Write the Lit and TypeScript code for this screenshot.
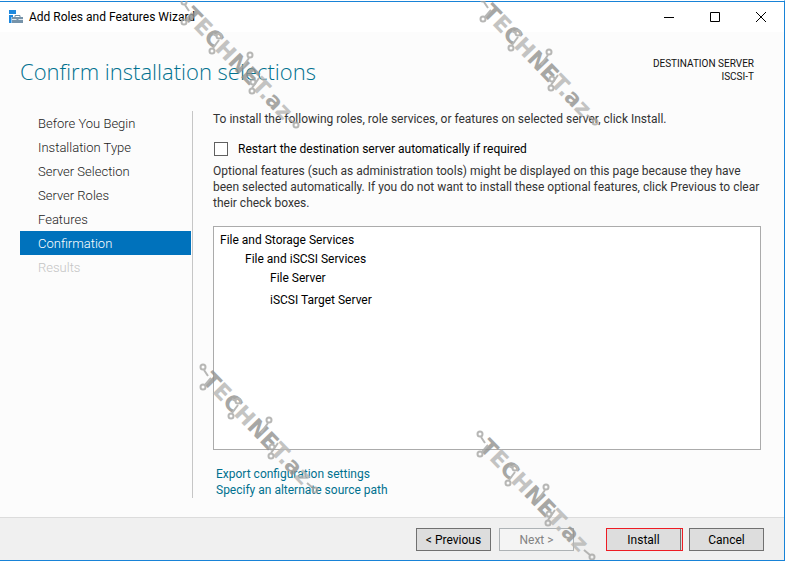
import { LitElement, html, css, svg } from "lit";
import { customElement, property } from "lit/decorators.js";
import { classMap } from "lit/directives/class-map.js";
import { styleMap } from "lit/directives/style-map.js";

type StepState = "done" | "current" | "disabled";

const STEPS: { label: string; state: StepState }[] = [
  { label: "Before You Begin", state: "done" },
  { label: "Installation Type", state: "done" },
  { label: "Server Selection", state: "done" },
  { label: "Server Roles", state: "done" },
  { label: "Features", state: "done" },
  { label: "Confirmation", state: "current" },
  { label: "Results", state: "disabled" },
];

const MARKS = [
  { x: 184, y: 2 },
  { x: 483, y: -1 },
  { x: 203, y: 367 },
  { x: 480, y: 434 },
];

/** Diagonal site stamp: lettering with circuit-board leads. */
@customElement("site-stamp")
class SiteStamp extends LitElement {
  static styles = css`
    :host {
      display: block;
      width: 130px;
      height: 136px;
    }
    svg {
      display: block;
      overflow: visible;
      opacity: 0.8;
    }
    .word {
      font: bold 22px "DejaVu Sans", sans-serif;
    }
    .dark {
      fill: #92928f;
    }
    .pale {
      fill: #b6b6b4;
    }
    .lead {
      fill: none;
      stroke: #a6a6a4;
      stroke-width: 2;
    }
  `;
  render() {
    const nodes = [[0, 0], [0, 20], [35, 34], [28, 49], [66, 53], [69, 80], [68, 89], [112, 123]];
    return html`<svg width="130" height="136" viewBox="-4 -4 130 136">
      <text class="word" transform="translate(-2 14) rotate(46)"
        ><tspan class="dark">T</tspan><tspan class="pale">E</tspan><tspan class="dark">C</tspan
        ><tspan class="pale">H</tspan><tspan class="dark">NE</tspan><tspan class="pale">T.</tspan
        ><tspan class="dark">a</tspan><tspan class="pale">z</tspan></text>
      <path class="lead" d="M1 3 L5 9 M2 18 L8 11 M33 34 L29 32 M29 46 L35 38 M65 56 L58 66 M68 86 L75 76 M110 121 L104 116" />
      ${nodes.map(([x, y]) => svg`<circle class="lead" cx=${x} cy=${y} r="2.5" />`)}
    </svg>`;
  }
}

@customElement("wizard-steps")
class WizardSteps extends LitElement {
  @property({ attribute: false }) steps: { label: string; state: StepState }[] = [];

  static styles = css`
    ol {
      list-style: none;
      margin: 0;
      padding: 0;
      font-size: 13px;
      font-weight: 300;
      line-height: 22px;
    }
    .step {
      padding: 2px 0 0 18px;
      color: #222;
    }
    .current {
      background: #0072bc;
      color: #fff;
    }
    .disabled {
      color: #c4c4c4;
    }
  `;
  render() {
    return html`<ol>
      ${this.steps.map(
        (s) => html`<li class=${classMap({ step: true, [s.state]: true })}>${s.label}</li>`
      )}
    </ol>`;
  }
}

@customElement("app-root")
class AppRoot extends LitElement {
  static styles = css`
    :host {
      display: block;
      font-family: Roboto, "Open Sans", sans-serif;
      font-size: 12px;
      line-height: 16px;
      color: #333;
    }
    * {
      box-sizing: border-box;
    }
    .window {
      position: relative;
      display: flex;
      flex-direction: column;
      min-height: 100vh;
      overflow: hidden;
      background: #fcfcfc;
      border-top: 1px solid #fff;
      border-right: 1px solid #1883d7;
      border-bottom: 1px solid #1883d7;
    }
    .titlebar {
      display: flex;
      align-items: center;
      justify-content: space-between;
      height: 31px;
      padding: 0 17px 0 8px;
      background: #fff;
      border-top: 1px solid #1883d7;
      color: #000;
    }
    .caption {
      display: flex;
      align-items: center;
      gap: 5px;
    }
    .controls {
      display: flex;
      gap: 34px;
    }
    .control {
      padding: 0;
      border: 0;
      background: none;
      height: 12px;
    }
    svg {
      display: block;
    }
    .heading {
      display: flex;
      justify-content: space-between;
      padding: 23px 30px 0 20px;
    }
    h1 {
      margin: 0;
      font-family: "Open Sans", "Noto Sans", sans-serif;
      font-size: 22px;
      font-weight: 300;
      line-height: 32px;
      color: #00718f;
    }
    .server {
      padding-top: 2px;
      font-size: 10px;
      line-height: 13px;
      text-align: right;
      color: #111;
    }
    .body {
      flex: 1;
      display: flex;
      padding: 24px 23px 19px 20px;
    }
    .steps {
      flex: none;
      width: 173px;
      padding-right: 1px;
      border-right: 1px solid #c6c6c6;
    }
    .content {
      flex: 1;
      min-width: 0;
      display: flex;
      flex-direction: column;
      padding-left: 20px;
    }
    p {
      margin: 0;
    }
    .restart {
      display: flex;
      align-items: center;
      gap: 10px;
      margin: 14px 0 6px;
      padding-left: 1px;
      color: #000;
    }
    .box {
      appearance: none;
      width: 14px;
      height: 14px;
      margin: 0;
      border: 1px solid #606060;
      background: #fff;
    }
    .summary {
      flex: 1;
      margin: 15px 0 16px;
      padding: 4px 6px;
      border: 1px solid #ababab;
      background: #fff;
      color: #000;
      line-height: 19px;
    }
    ul {
      list-style: none;
      margin: 0;
      padding: 0;
    }
    ul ul {
      padding-left: 25px;
    }
    .role + .role {
      margin-top: 3px;
    }
    .links {
      display: flex;
      flex-direction: column;
      align-items: flex-start;
      padding-left: 3px;
    }
    a {
      color: #00718f;
      text-decoration: none;
    }
    .footer {
      display: flex;
      justify-content: flex-end;
      gap: 8px;
      padding: 10px 20px 9px;
      background: #f0f0f0;
      border-top: 1px solid #dcdcdc;
    }
    .button {
      width: 75px;
      height: 23px;
      padding: 0;
      border: 1px solid #707070;
      background: #ddd;
      font: inherit;
      color: #000;
    }
    .button:disabled {
      border-color: #adb2b5;
      background: #f4f4f4;
      color: #838383;
    }
    .primary {
      width: 77px;
      margin-left: 24px;
      margin-right: -2px;
      padding-right: 2px;
      border-color: #ed1c24;
      box-shadow: inset -1px 0 #ddd, inset -2px 0 #707070;
    }
    .stamp {
      position: absolute;
      pointer-events: none;
    }
  `;

  render() {
    return html`<div class="window">
      <header class="titlebar">
        <div class="caption">
          <svg width="16" height="16" viewBox="0 0 16 16" aria-hidden="true">
            <path d="M1 1h7v4H1zM1 6h4v2H3.500v6H1z" fill="#1e88dd" />
            <path d="M7 8V6.500h5V8" fill="none" stroke="#6f8fa8" />
            <path d="M4 8h11v6H4z" fill="#7693aa" />
            <path d="M4 10.500h4.500M10.500 10.500H15" stroke="#dfe8ee" fill="none" />
          </svg>
          <span>Add Roles and Features Wizard</span>
        </div>
        <div class="controls">
          <button class="control" aria-label="Minimize">
            <svg width="12" height="12" viewBox="0 0 12 12"><path d="M1 6.500h10" stroke="#000" /></svg>
          </button>
          <button class="control" aria-label="Maximize">
            <svg width="12" height="12" viewBox="0 0 12 12"><path d="M1.500 1.500h9v9h-9z" stroke="#000" fill="none" /></svg>
          </button>
          <button class="control" aria-label="Close">
            <svg width="12" height="12" viewBox="0 0 12 12"><path d="M1 1l10 10M11 1L1 11" stroke="#000" /></svg>
          </button>
        </div>
      </header>
      <div class="heading">
        <h1>Confirm installation selections</h1>
        <div class="server">DESTINATION SERVER<br />ISCSI-T</div>
      </div>
      <div class="body">
        <nav class="steps"><wizard-steps .steps=${STEPS}></wizard-steps></nav>
        <main class="content">
          <p>To install the following roles, role services, or features on selected server, click Install.</p>
          <label class="restart">
            <input class="box" type="checkbox" />
            <span>Restart the destination server automatically if required</span>
          </label>
          <p>
            Optional features (such as administration tools) might be displayed on this page because they have
            been selected automatically. If you do not want to install these optional features, click Previous to clear
            their check boxes.
          </p>
          <div class="summary">
            <ul>
              <li>File and Storage Services
                <ul>
                  <li>File and iSCSI Services
                    <ul>
                      <li class="role">File Server</li>
                      <li class="role">iSCSI Target Server</li>
                    </ul>
                  </li>
                </ul>
              </li>
            </ul>
          </div>
          <div class="links">
            <a href="#export">Export configuration settings</a>
            <a href="#source">Specify an alternate source path</a>
          </div>
        </main>
      </div>
      <footer class="footer">
        <button class="button">&lt; Previous</button>
        <button class="button" disabled>Next &gt;</button>
        <button class="button primary">Install</button>
        <button class="button">Cancel</button>
      </footer>
      ${MARKS.map(
        (m) => html`<site-stamp class="stamp" style=${styleMap({ left: `${m.x - 4}px`, top: `${m.y - 5}px` })}></site-stamp>`
      )}
    </div>`;
  }
}
